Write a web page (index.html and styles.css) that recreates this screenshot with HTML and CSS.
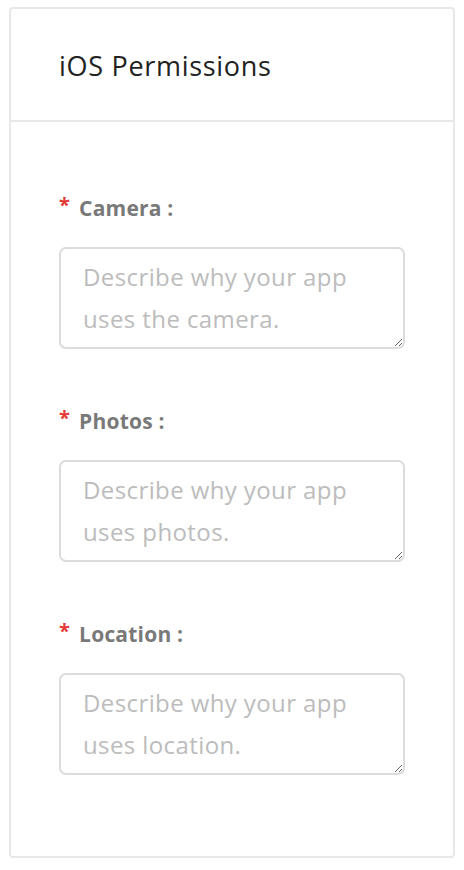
FILE: index.html
```html
<!DOCTYPE html>
<html>
<head>
<meta charset="utf-8">
<link rel="stylesheet" href="styles.css">
</head>
<body>
<div class="card">
  <div class="card-header">
    <h2 class="title">iOS Permissions</h2>
  </div>
  <div class="card-body">
    <div class="field">
      <label class="label"><span class="req">*</span>Camera :</label>
      <textarea class="input" placeholder="Describe why your app uses the camera."></textarea>
    </div>
    <div class="field">
      <label class="label"><span class="req">*</span>Photos :</label>
      <textarea class="input" placeholder="Describe why your app uses photos."></textarea>
    </div>
    <div class="field">
      <label class="label"><span class="req">*</span>Location :</label>
      <textarea class="input" placeholder="Describe why your app uses location."></textarea>
    </div>
  </div>
</div>
</body>
</html>
```

FILE: styles.css
```css
html, body {
  margin: 0;
  padding: 0;
  background: #fff;
}
body {
  font-family: "Open Sans", Lato, sans-serif;
  padding: 7px 9px 0 9px;
}
.card {
  width: 446px;
  height: 851px;
  box-sizing: border-box;
  border: 2px solid #e8e8e8;
  border-radius: 4px;
  display: flex;
  flex-direction: column;
}
.card-header {
  height: 113px;
  border-bottom: 2px solid #e8e8e8;
  display: flex;
  align-items: center;
  padding-left: 48px;
  box-sizing: border-box;
}
.title {
  margin: 0;
  font-size: 27px;
  line-height: 34px;
  font-weight: 400;
  color: #222;
  letter-spacing: 0.7px;
  padding-top: 2px;
}
.card-body {
  padding: 72px 48px 0 48px;
  display: flex;
  flex-direction: column;
  gap: 58px;
}
.field {
  display: flex;
  flex-direction: column;
  gap: 25px;
}
.label {
  font-size: 21px;
  line-height: 28px;
  font-weight: 700;
  color: #797979;
  display: flex;
  align-items: center;
  letter-spacing: 0.2px;
}
.req {
  color: #e53935;
  font-size: 20px;
  margin-right: 9px;
  position: relative;
  top: -3px;
}
.input {
  width: 346px;
  height: 102px;
  box-sizing: border-box;
  border: 2px solid #dcdcdc;
  border-radius: 7px;
  padding: 7px 22px;
  font-family: inherit;
  font-size: 24px;
  line-height: 42px;
  letter-spacing: 0.4px;
  color: #333;
  resize: both;
  outline: none;
}
.input::placeholder {
  color: #bcbcbc;
}
```
